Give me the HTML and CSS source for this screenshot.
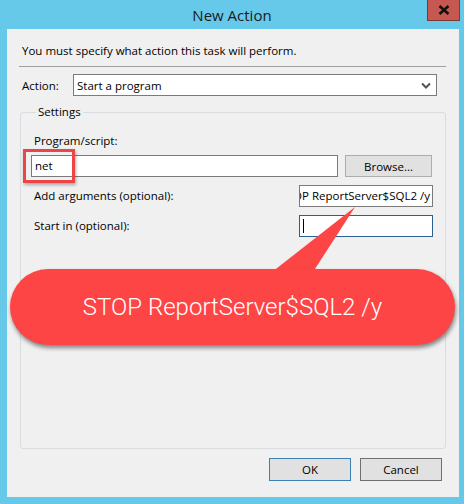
FILE: index.html
```html
<!DOCTYPE html>
<html lang="en">
<head>
    <meta charset="UTF-8">
    <title>New Action</title>
    <link rel="stylesheet" href="styles.css">
</head>
<body>
    <div class="window">
        <div class="titlebar">
            <div class="title">New Action</div>
            <button class="close-button">
                <svg width="12" height="10" viewBox="0 0 12 10"><path d="M1.5 1 L10.5 9 M10.5 1 L1.5 9" stroke="#111" stroke-width="2.6"/></svg>
            </button>
        </div>

        <div class="client">
            <p class="intro">You must specify what action this task will perform.</p>
            <div class="separator"></div>

            <div class="action-row">
                <label>Action:</label>
                <div class="select">
                    <span>Start a program</span>
                    <svg width="10" height="7" viewBox="0 0 10 7"><path d="M1 1.5 L5 5.5 L9 1.5" stroke="#555" stroke-width="2" fill="none"/></svg>
                </div>
            </div>

            <fieldset class="settings">
                <legend>Settings</legend>
                <div class="field-label">Program/script:</div>
                <div class="program-row">
                    <div class="textbox program">net</div>
                    <button class="button browse">Browse...</button>
                </div>
                <div class="line-row">
                    <div class="field-label">Add arguments (optional):</div>
                    <div class="textbox small scrolled"><span>STOP ReportServer$SQL2 /y</span></div>
                </div>
                <div class="line-row">
                    <div class="field-label">Start in (optional):</div>
                    <div class="textbox small focused"><span class="caret"></span></div>
                </div>
            </fieldset>

            <div class="footer">
                <button class="button default">OK</button>
                <button class="button">Cancel</button>
            </div>
        </div>

        <!-- annotation overlay -->
        <div class="highlight"></div>
        <svg class="tail" width="464" height="504" viewBox="0 0 464 504">
            <polygon points="272,272 313,272 355,207" fill="#fe4545"/>
        </svg>
        <div class="callout">STOP ReportServer$SQL2 /y</div>
    </div>
</body>
</html>
```

FILE: styles.css
```css
body {
    margin: 0;
    padding: 0;
    background: #66c9e9;
    font-family: "Open Sans", "Noto Sans", sans-serif;
    font-size: 11.5px;
    color: #000;
}
.window {
    position: relative;
    width: 464px;
    height: 504px;
    overflow: hidden;
}
.titlebar {
    height: 29px;
    display: flex;
    align-items: flex-start;
}
.title {
    flex: 1;
    padding-left: 37px;
    text-align: center;
    font-size: 15px;
    line-height: 30px;
    color: #1b1b1b;
}
.close-button {
    width: 33px;
    height: 21px;
    margin-right: 4px;
    border: 1px solid #7a3b37;
    border-top: none;
    background: #c75751;
    padding: 0;
    display: flex;
    align-items: center;
    justify-content: center;
}
.client {
    margin: 0 5px 0 7px;
    height: 468px;
    background: #f0f0f0;
    padding: 0 13px 0 12px;
    box-sizing: border-box;
    display: flex;
    flex-direction: column;
}
.intro {
    margin: 14px 0 0 3px;
    line-height: 16px;
}
.separator {
    height: 1px;
    background: #a0a0a0;
    margin-top: 7px;
}
.action-row {
    display: flex;
    align-items: center;
    margin-top: 7px;
}
.action-row label {
    width: 51px;
    padding-left: 3px;
}
.select {
    flex: 1;
    height: 22px;
    box-sizing: border-box;
    border: 1px solid #7a7a7a;
    background: #fff;
    display: flex;
    align-items: center;
    justify-content: space-between;
    padding: 0 5px 0 3px;
    margin-right: 9px;
}
.settings {
    margin: 9px 0 0 1px;
    border: 1px solid #d9dde2;
    border-radius: 3px;
    padding: 0 12px 0 10px;
    height: 344px;
    box-sizing: border-box;
    flex-shrink: 0;
}
.settings legend {
    padding: 0 2px;
    margin-left: 5px;
    line-height: 14px;
}
.field-label {
    padding-left: 3px;
    line-height: 16px;
}
.settings > .field-label {
    margin-top: 14px;
}
.program-row {
    display: flex;
    align-items: center;
    gap: 7px;
    margin-top: 6px;
}
.textbox {
    height: 22px;
    box-sizing: border-box;
    border: 1px solid #7a7a7a;
    background: #fff;
    padding: 0 3px;
    line-height: 19px;
    white-space: nowrap;
    overflow: hidden;
}
.textbox.program {
    width: 307px;
}
.textbox.small {
    width: 134px;
}
.textbox.scrolled {
    display: flex;
    justify-content: flex-end;
    padding: 0 2px 0 0;
}
.textbox.scrolled span {
    flex-shrink: 0;
}
.textbox.focused {
    border-color: #2b5f8e;
}
.caret {
    display: inline-block;
    width: 1px;
    height: 14px;
    background: #000;
    vertical-align: -3px;
}
.button {
    font-family: inherit;
    font-size: 11.5px;
    color: #000;
    height: 22px;
    background: #e1e1e1;
    border: 1px solid #adadad;
    padding: 0;
}
.browse {
    width: 87px;
}
.line-row {
    display: flex;
    justify-content: space-between;
    align-items: center;
    margin-top: 8px;
}
.line-row + .line-row {
    margin-top: 8px;
}
.footer {
    display: flex;
    justify-content: flex-end;
    gap: 9px;
    margin-top: 9px;
    padding-right: 4px;
}
.footer .button {
    width: 82px;
    height: 23px;
    border-color: #707070;
}
.footer .button.default {
    border-color: #3c7fb1;
}
.highlight {
    position: absolute;
    left: 23px;
    top: 149px;
    width: 46px;
    height: 28px;
    border: 3px solid #ec4447;
    box-shadow: 1px 2px 3px rgba(0, 0, 0, 0.3);
}
.tail {
    position: absolute;
    left: 0;
    top: 0;
}
.callout {
    position: absolute;
    left: 10px;
    top: 269px;
    width: 445px;
    height: 76px;
    border-radius: 38px;
    background: #fe4545;
    box-shadow: 1px 3px 4px rgba(0, 0, 0, 0.45);
    color: #fff;
    font-family: Roboto, sans-serif;
    font-weight: 300;
    font-size: 24px;
    line-height: 76px;
    text-align: center;
}
```
